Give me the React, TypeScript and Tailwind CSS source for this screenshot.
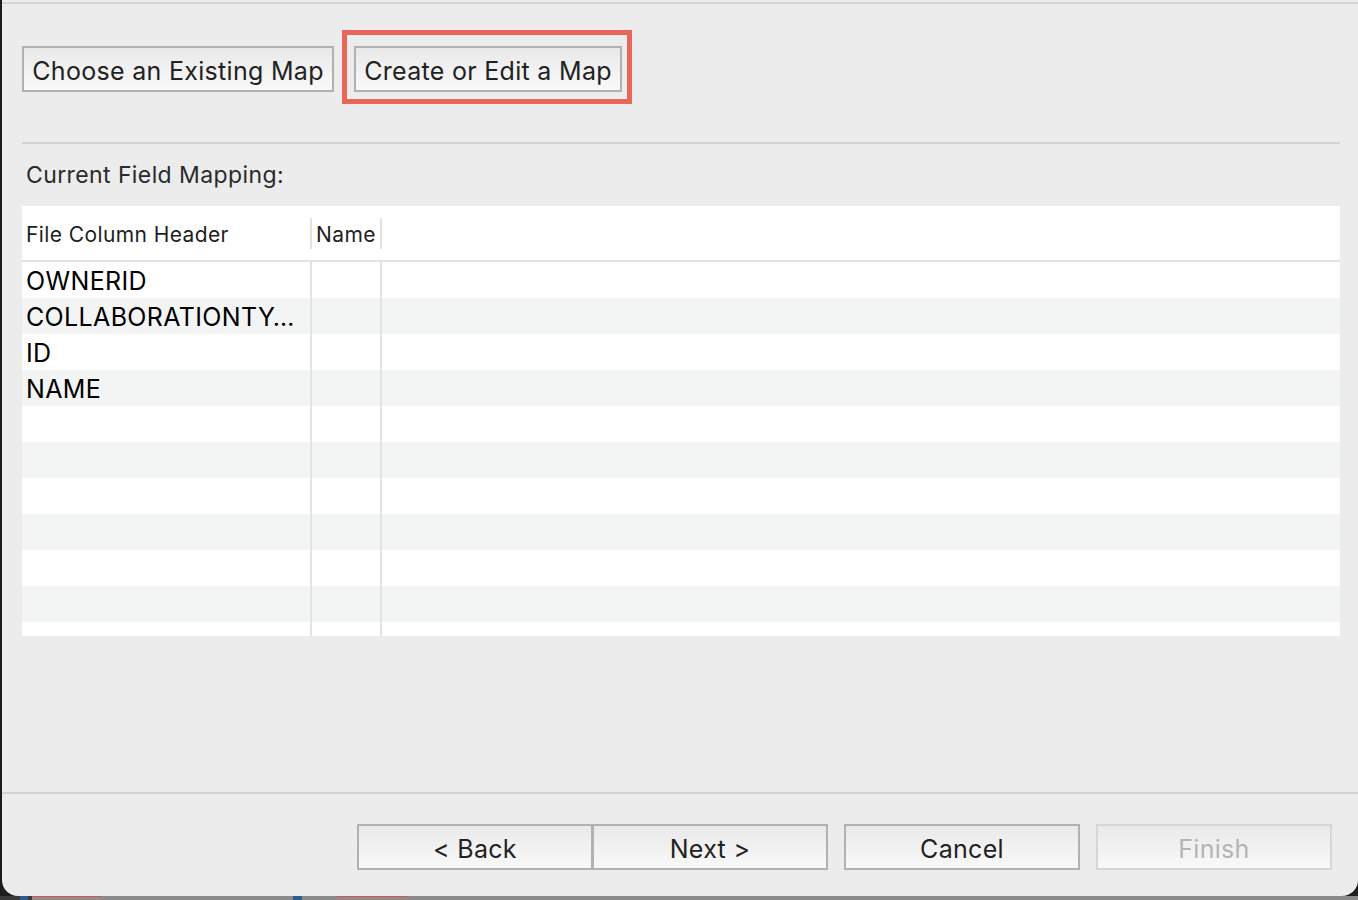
import React from 'react';

const rows = ['OWNERID', 'COLLABORATIONTY…', 'ID', 'NAME', '', '', '', '', '', '', ''];

function MacButton({ label, disabled = false, className = '' }: { label: string; disabled?: boolean; className?: string }) {
  return (
    <button
      disabled={disabled}
      className={`h-[46px] pt-[5px] border-2 bg-gradient-to-b from-[#e9e9e9] to-[#f9f9f9] text-[25px] tracking-[0.3px] leading-none ${
        disabled ? 'border-[#d6d6d6] text-[#b4b4b4]' : 'border-[#b1b1b1] text-[#222222]'
      } ${className}`}
    >
      {label}
    </button>
  );
}

export default function App() {
  return (
    <div className="w-[1358px] h-[900px] bg-[#1f1f1f] flex flex-col overflow-hidden" style={{ fontFamily: 'Inter, "Liberation Sans", sans-serif' }}>
      <div className="flex flex-1 min-h-0">
        <div className="w-[2px] bg-[#1c1c1c]" />
        {/* Dialog window */}
        <div className="flex-1 flex flex-col bg-[#ececec] rounded-b-[16px]">
          <div className="h-[2px]" />
          <div className="h-[2px] bg-[#d5d5d5]" />

          <div className="pl-[20px] pr-[18px] flex flex-col">
            {/* Mode buttons */}
            <div className="flex items-start gap-[20px] mt-[42px]">
              <MacButton label="Choose an Existing Map" className="w-[312px]" />
              <div className="relative">
                <MacButton label="Create or Edit a Map" className="w-[268px]" />
                <span className="absolute -top-[16px] -left-[12px] -right-[10px] -bottom-[12px] border-[5px] border-[#e9665a] pointer-events-none" />
              </div>
            </div>

            <div className="h-[2px] bg-[#d3d3d3] mt-[50px]" />

            <div className="mt-[18px] pl-[4px] text-[23px] tracking-[0.4px] leading-[26px] text-[#2a2a2a]">Current Field Mapping:</div>

            {/* Mapping table */}
            <div className="mt-[18px] bg-white h-[430px] overflow-hidden flex flex-col">
              <div className="h-[54px] flex items-center shrink-0 text-[21px] tracking-[0.4px] text-[#1e1e1e]">
                <div className="w-[288px] pl-[4px] pt-[4px]">File Column Header</div>
                <div className="w-[2px] h-[31px] bg-[#e2e2e2]" />
                <div className="w-[68px] pl-[4px] pt-[4px]">Name</div>
                <div className="w-[2px] h-[31px] bg-[#e2e2e2]" />
              </div>
              <div className="h-[2px] bg-[#e3e3e3] shrink-0" />
              {rows.map((r, i) => (
                <div key={i} className={`h-[36px] shrink-0 flex ${i % 2 === 1 ? 'bg-[#f3f4f4]' : 'bg-white'}`}>
                  <div className="w-[288px] pl-[4px] pt-[1px] text-[25px] tracking-[0.35px] leading-[36px] text-black whitespace-nowrap overflow-hidden">{r}</div>
                  <div className="w-[2px] bg-[#e3e3e3]" />
                  <div className="w-[68px]" />
                  <div className="w-[2px] bg-[#e3e3e3]" />
                </div>
              ))}
            </div>
          </div>

          <div className="flex-1" />
          <div className="h-[2px] bg-[#d3d3d3]" />

          {/* Wizard buttons */}
          <div className="flex justify-end items-start pr-[26px] pt-[30px] pb-[26px]">
            <MacButton label="< Back" className="w-[236px]" />
            <MacButton label="Next >" className="w-[236px] -ml-[1px]" />
            <MacButton label="Cancel" className="w-[236px] ml-[16px]" />
            <MacButton label="Finish" disabled className="w-[236px] ml-[16px]" />
          </div>
        </div>
      </div>
      {/* Taskbar strip below the window */}
      <div className="h-[4px] flex bg-[#3a3a3a] shrink-0">
        <div className="w-[20px]" />
        <div className="w-[8px] bg-[#2d5d8c]" />
        <div className="w-[4px]" />
        <div className="w-[70px] border-t border-[#d9534a] bg-[#8d8d8d]" />
        <div className="w-[191px] bg-[#8a8a8a]" />
        <div className="w-[9px] bg-[#2d5d8c]" />
        <div className="w-[35px] bg-[#8a8a8a]" />
        <div className="w-[70px] border-t border-[#d9534a] bg-[#8d8d8d]" />
        <div className="flex-1 bg-[#8a8a8a]" />
      </div>
    </div>
  );
}
